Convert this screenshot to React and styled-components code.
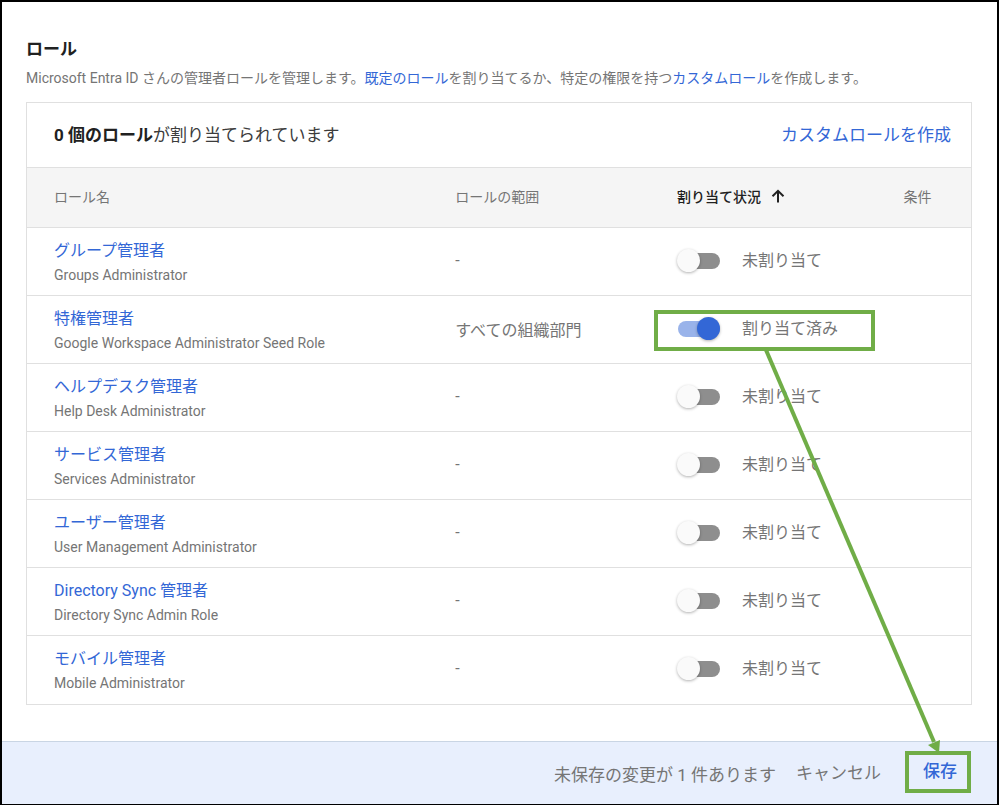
import React, { useState } from 'react';
import styled, { createGlobalStyle } from 'styled-components';

const GlobalStyle = createGlobalStyle`
  *,
  *::before,
  *::after {
    box-sizing: border-box;
  }

  body {
    margin: 0;
    background: #fff;
    color: #757575;
    font-family: Roboto, 'Noto Sans CJK JP', sans-serif;
    font-size: 14px;
  }

  button,
  input {
    margin: 0;
    font-family: inherit;
  }
`;

const Page = styled.div`
  position: relative;
  display: flex;
  flex-direction: column;
  min-height: 100vh;
  border: 2px solid #000;
`;

const Main = styled.main`
  flex: 1;
  padding: 34px 25px 36px 24px;
`;

const Title = styled.h1`
  margin: 0;
  color: #212121;
  font-size: 17px;
  font-weight: 700;
  line-height: 26px;
`;

const Description = styled.p`
  margin: 4px 0 12px;
  line-height: 24px;
  white-space: nowrap;
`;

const Link = styled.a`
  color: #3367d6;
  text-decoration: none;
`;

const Card = styled.section`
  border: 1px solid #e0e0e0;
`;

const CardHeader = styled.div`
  display: flex;
  align-items: center;
  justify-content: space-between;
  padding: 20px 20px 20px 27px;
  font-size: 17px;
  line-height: 24px;
`;

const Summary = styled.h2`
  margin: 0;
  color: #3c3c3c;
  font-size: 17px;
  font-weight: 400;

  strong {
    color: #212121;
  }
`;

const Table = styled.table`
  width: 100%;
  border-collapse: collapse;
  table-layout: fixed;
`;

const HeadCell = styled.th`
  width: ${props => props.$width};
  height: 60px;
  padding: 0 0 4px 27px;
  border-top: 1px solid #e0e0e0;
  background: #f5f5f5;
  color: ${props => (props.$sorted ? '#212121' : '#757575')};
  font-size: 14px;
  font-weight: ${props => (props.$sorted ? 500 : 400)};
  text-align: left;
`;

const SortButton = styled.button`
  display: flex;
  align-items: center;
  gap: 10px;
  padding: 0;
  border: 0;
  background: none;
  color: inherit;
  font-size: 14px;
  font-weight: inherit;
`;

const Cell = styled.td`
  height: 68px;
  padding: 0 0 0 27px;
  border-top: 1px solid #e0e0e0;
  font-size: 16px;
`;

const Scope = styled(Cell)`
  padding-bottom: 2px;
`;

const RoleLink = styled(Link)`
  display: block;
  padding-top: 2px;
  font-size: 16px;
  line-height: 24px;
`;

const RoleNote = styled.div`
  font-size: 14px;
  line-height: 24px;
`;

const Status = styled.div`
  position: relative;
  display: flex;
  align-items: center;
  gap: 22px;
  padding-bottom: 2px;

  label {
    padding-bottom: 3px;
  }

  /* callout frame, drawn over the cell */
  &::after {
    content: ${props => (props.$marked ? "''" : 'none')};
    position: absolute;
    top: -5px;
    left: -23px;
    width: 221px;
    height: 41px;
    border: 4px solid #70ad47;
    pointer-events: none;
  }
`;

const Switch = styled.input`
  display: grid;
  align-items: center;
  width: 43px;
  height: 24px;
  appearance: none;
  cursor: pointer;

  &::before,
  &::after {
    content: '';
    grid-area: 1 / 1;
  }

  &::before {
    height: 16px;
    margin-left: 1px;
    border-radius: 8px;
    background: #8e8e8e;
  }

  &::after {
    width: 23px;
    height: 23px;
    border-radius: 50%;
    background: #fafafa;
    box-shadow: 0 1px 3px rgba(0, 0, 0, 0.3);
  }

  &:checked::before {
    background: #99b3ea;
  }

  &:checked::after {
    justify-self: end;
    background: #3367d6;
  }
`;

const Footer = styled.footer`
  display: flex;
  align-items: center;
  justify-content: flex-end;
  min-height: 63px;
  padding: 0 26px 2px 24px;
  border-top: 1px solid #c9d5e4;
  background: #e8effd;
  font-size: 17px;
`;

const Unsaved = styled.span`
  padding-top: 4px;
`;

const TextButton = styled.button`
  padding: 0;
  border: 0;
  background: none;
  color: ${props => (props.$primary ? '#3367d6' : '#757575')};
  font-size: 17px;
  font-weight: ${props => (props.$primary ? 500 : 400)};
  cursor: pointer;
`;

const Cancel = styled(TextButton)`
  margin: 0 24px 0 20px;
`;

const SaveFrame = styled.div`
  display: flex;
  align-items: center;
  justify-content: center;
  width: 66px;
  height: 42px;
  padding: 0 0 4px 4px;
  border: 4px solid #70ad47;
`;

const Pointer = styled.svg`
  position: absolute;
  right: 50px;
  bottom: 50px;
  pointer-events: none;
`;

const roles = [
  { id: 'groups', name: 'グループ管理者', note: 'Groups Administrator', scope: '-' },
  { id: 'seed', name: '特権管理者', note: 'Google Workspace Administrator Seed Role', scope: 'すべての組織部門' },
  { id: 'helpdesk', name: 'ヘルプデスク管理者', note: 'Help Desk Administrator', scope: '-' },
  { id: 'services', name: 'サービス管理者', note: 'Services Administrator', scope: '-' },
  { id: 'users', name: 'ユーザー管理者', note: 'User Management Administrator', scope: '-' },
  { id: 'dirsync', name: 'Directory Sync 管理者', note: 'Directory Sync Admin Role', scope: '-' },
  { id: 'mobile', name: 'モバイル管理者', note: 'Mobile Administrator', scope: '-' }
];

const ArrowUp = () => (
  <svg width="14" height="14" viewBox="0 0 14 14" fill="none" stroke="currentColor" strokeWidth="2" aria-hidden="true">
    <path d="M7 13.5V2M1.5 7.2L7 1.8l5.5 5.4" />
  </svg>
);

const RoleRow = ({ role, assigned, onToggle }) => {
  return (
    <tr>
      <Cell>
        <RoleLink href="#">{role.name}</RoleLink>
        <RoleNote>{role.note}</RoleNote>
      </Cell>
      <Scope>{role.scope}</Scope>
      <Cell>
        <Status $marked={role.id === 'seed'}>
          <Switch type="checkbox" id={role.id} checked={assigned} onChange={() => onToggle(role.id)} />
          <label htmlFor={role.id}>{assigned ? '割り当て済み' : '未割り当て'}</label>
        </Status>
      </Cell>
      <Cell />
    </tr>
  );
};

const App = () => {
  const [assigned, setAssigned] = useState({ seed: true });

  const toggle = id => setAssigned({ ...assigned, [id]: !assigned[id] });

  return (
    <Page>
      <GlobalStyle />
      <Main>
        <Title>ロール</Title>
        <Description>
          Microsoft Entra ID さんの管理者ロールを管理します。<Link href="#">既定のロール</Link>
          を割り当てるか、特定の権限を持つ<Link href="#">カスタムロール</Link>を作成します。
        </Description>
        <Card>
          <CardHeader>
            <Summary>
              <strong>0 個のロール</strong>が割り当てられています
            </Summary>
            <Link href="#">カスタムロールを作成</Link>
          </CardHeader>
          <Table>
            <thead>
              <tr>
                <HeadCell $width="42.5%">ロール名</HeadCell>
                <HeadCell $width="23.5%">ロールの範囲</HeadCell>
                <HeadCell $width="24%" $sorted aria-sort="ascending">
                  <SortButton type="button">
                    割り当て状況
                    <ArrowUp />
                  </SortButton>
                </HeadCell>
                <HeadCell>条件</HeadCell>
              </tr>
            </thead>
            <tbody>
              {roles.map(role => (
                <RoleRow key={role.id} role={role} assigned={!!assigned[role.id]} onToggle={toggle} />
              ))}
            </tbody>
          </Table>
        </Card>
      </Main>
      <Footer>
        <Unsaved>未保存の変更が 1 件あります</Unsaved>
        <Cancel type="button">キャンセル</Cancel>
        <SaveFrame>
          <TextButton type="button" $primary>
            保存
          </TextButton>
        </SaveFrame>
      </Footer>
      <Pointer width="184" height="404" viewBox="0 0 184 404" aria-hidden="true">
        <path d="M3 0L171 392" fill="none" stroke="#70ad47" strokeWidth="4" />
        <path d="M165 395L177 390L176 403Z" fill="#70ad47" />
      </Pointer>
    </Page>
  );
};

export default App;
